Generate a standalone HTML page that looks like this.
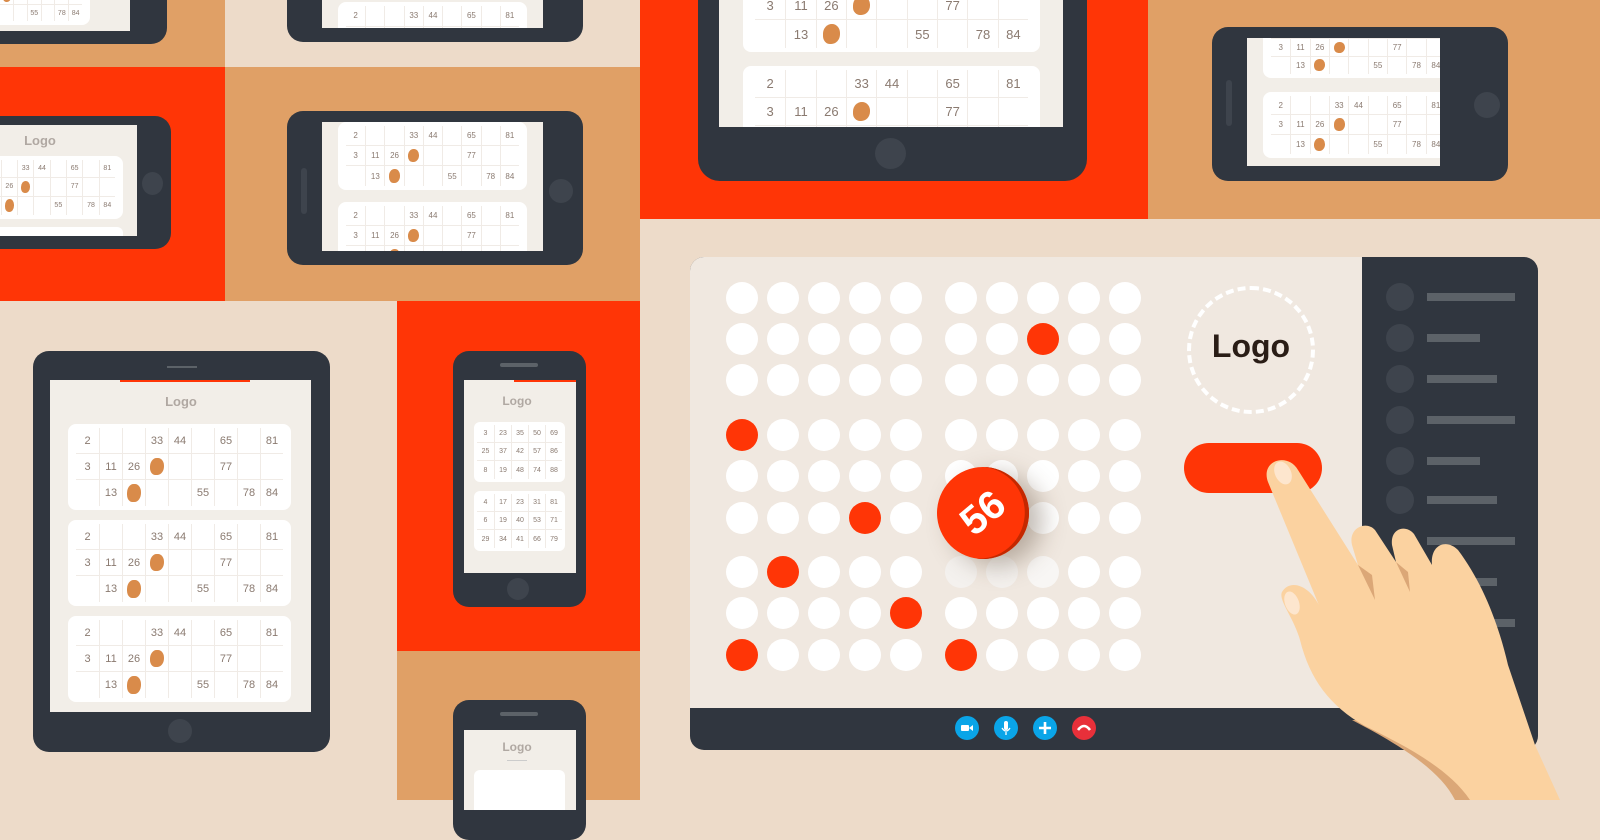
<!DOCTYPE html>
<html><head><meta charset="utf-8"><style>
*{margin:0;padding:0;box-sizing:border-box}
body{width:1600px;height:800px;overflow:hidden;position:relative;background:#EDDBC9;font-family:"Liberation Sans",sans-serif}
.a{position:absolute}
.fr{position:absolute;background:#30363F;border-radius:16px}
.sc{position:absolute;background:#F2EEE8;overflow:hidden}
.card{position:absolute;background:#fff;border-radius:8px;display:grid;grid-template-columns:repeat(9,1fr);grid-template-rows:repeat(3,1fr);padding:4px 8px;color:#8a7a70}
.card i{font-style:normal;display:flex;align-items:center;justify-content:center;border-left:1px solid #f0ebe6;border-bottom:1px solid #f0ebe6;position:relative}
.card i:nth-child(9n+1){border-left:none}
.card i:nth-child(n+19){border-bottom:none}
.card b{display:block;width:60%;height:70%;background:#D98B4A;border-radius:50% 45% 50% 40%}
.btn{position:absolute;background:#3E444D;border-radius:50%}
.lg{position:absolute;color:#b0a8a2;font-weight:bold;text-align:center}
.pc{position:absolute;background:#fff;border-radius:6px;display:grid;grid-template-columns:repeat(5,1fr);grid-template-rows:repeat(3,1fr);font-size:7px;color:#8a7a70;padding:3px}
.pc i{font-style:normal;display:flex;align-items:center;justify-content:center;border-left:1px solid #f0ebe6;border-bottom:1px solid #f0ebe6}
.pc i:nth-child(5n+1){border-left:none}.pc i:nth-child(n+11){border-bottom:none}
.d{position:absolute;width:32px;height:32px;border-radius:50%;background:#fff;margin:-16px 0 0 -16px}
.r{background:#FF3506}
.sb{position:absolute;left:1386px;width:28px;height:28px;border-radius:50%;background:#3E444D}
.sl{position:absolute;left:1427px;height:8px;background:#5C6268}
.ic{position:absolute;top:716px}
</style></head><body>
<div class="a" style="left:0;top:0;width:225px;height:67px;background:#E0A066"></div>
<div class="a" style="left:0;top:67px;width:225px;height:234px;background:#FF3506"></div>
<div class="a" style="left:225px;top:67px;width:415px;height:234px;background:#E0A066"></div>
<div class="a" style="left:397px;top:301px;width:243px;height:350px;background:#FF3506"></div>
<div class="a" style="left:397px;top:651px;width:243px;height:149px;background:#E0A066"></div>
<div class="a" style="left:640px;top:0;width:508px;height:219px;background:#FF3506"></div>
<div class="a" style="left:1148px;top:0;width:452px;height:219px;background:#E0A066"></div>

<div class="fr" style="left:-40px;top:-80px;width:207px;height:124px"></div>
<div class="sc" style="left:-10px;top:-10px;width:140px;height:41px">
<div class="card" style="left:-40px;top:-20px;width:140px;height:55px;font-size:7px"><i>2</i><i></i><i></i><i>33</i><i>44</i><i></i><i>65</i><i></i><i>81</i><i>3</i><i>11</i><i>26</i><i><b></b></i><i></i><i></i><i>77</i><i></i><i></i><i></i><i>13</i><i><b></b></i><i></i><i></i><i>55</i><i></i><i>78</i><i>84</i></div></div>

<div class="fr" style="left:287px;top:-100px;width:296px;height:142px"></div>
<div class="sc" style="left:322px;top:-10px;width:221px;height:38px">
<div class="card" style="left:16px;top:12px;width:189px;height:70px;font-size:8px"><i>2</i><i></i><i></i><i>33</i><i>44</i><i></i><i>65</i><i></i><i>81</i><i>3</i><i>11</i><i>26</i><i><b></b></i><i></i><i></i><i>77</i><i></i><i></i><i></i><i>13</i><i><b></b></i><i></i><i></i><i>55</i><i></i><i>78</i><i>84</i></div></div>

<div class="fr" style="left:-60px;top:116px;width:231px;height:133px"></div>
<div class="sc" style="left:-30px;top:125px;width:167px;height:111px">
<div class="lg" style="left:30px;top:8px;width:80px;font-size:13px">Logo</div>
<div class="card" style="left:-10px;top:31px;width:163px;height:63px;font-size:7px"><i>2</i><i></i><i></i><i>33</i><i>44</i><i></i><i>65</i><i></i><i>81</i><i>3</i><i>11</i><i>26</i><i><b></b></i><i></i><i></i><i>77</i><i></i><i></i><i></i><i>13</i><i><b></b></i><i></i><i></i><i>55</i><i></i><i>78</i><i>84</i></div>
<div class="a" style="left:-10px;top:102px;width:163px;height:20px;background:#fff;border-radius:6px"></div></div>
<div class="btn" style="left:142px;top:172px;width:21px;height:23px"></div>

<div class="fr" style="left:287px;top:111px;width:296px;height:154px"></div>
<div class="a" style="left:301px;top:168px;width:6px;height:46px;border-radius:3px;background:#3E444D"></div>
<div class="btn" style="left:549px;top:179px;width:24px;height:24px"></div>
<div class="sc" style="left:322px;top:122px;width:221px;height:129px">
<div class="card" style="left:16px;top:0;height:68px;font-size:8px;width:189px"><i>2</i><i></i><i></i><i>33</i><i>44</i><i></i><i>65</i><i></i><i>81</i><i>3</i><i>11</i><i>26</i><i><b></b></i><i></i><i></i><i>77</i><i></i><i></i><i></i><i>13</i><i><b></b></i><i></i><i></i><i>55</i><i></i><i>78</i><i>84</i></div>
<div class="card" style="left:16px;top:80px;width:189px;height:68px;font-size:8px"><i>2</i><i></i><i></i><i>33</i><i>44</i><i></i><i>65</i><i></i><i>81</i><i>3</i><i>11</i><i>26</i><i><b></b></i><i></i><i></i><i>77</i><i></i><i></i><i></i><i>13</i><i><b></b></i><i></i><i></i><i>55</i><i></i><i>78</i><i>84</i></div></div>

<div class="fr" style="left:33px;top:351px;width:297px;height:401px"></div>
<div class="a" style="left:167px;top:366px;width:30px;height:2px;background:#5C6268"></div>
<div class="btn" style="left:168px;top:719px;width:24px;height:24px"></div>
<div class="sc" style="left:50px;top:380px;width:261px;height:332px">
<div class="a" style="left:70px;top:0;width:130px;height:2px;background:#FF3506"></div>
<div class="lg" style="left:90px;top:14px;width:82px;font-size:13px">Logo</div>
<div class="card" style="left:18px;top:44px;width:223px;height:86px;font-size:11px"><i>2</i><i></i><i></i><i>33</i><i>44</i><i></i><i>65</i><i></i><i>81</i><i>3</i><i>11</i><i>26</i><i><b></b></i><i></i><i></i><i>77</i><i></i><i></i><i></i><i>13</i><i><b></b></i><i></i><i></i><i>55</i><i></i><i>78</i><i>84</i></div>
<div class="card" style="left:18px;top:140px;width:223px;height:86px;font-size:11px"><i>2</i><i></i><i></i><i>33</i><i>44</i><i></i><i>65</i><i></i><i>81</i><i>3</i><i>11</i><i>26</i><i><b></b></i><i></i><i></i><i>77</i><i></i><i></i><i></i><i>13</i><i><b></b></i><i></i><i></i><i>55</i><i></i><i>78</i><i>84</i></div>
<div class="card" style="left:18px;top:236px;width:223px;height:86px;font-size:11px"><i>2</i><i></i><i></i><i>33</i><i>44</i><i></i><i>65</i><i></i><i>81</i><i>3</i><i>11</i><i>26</i><i><b></b></i><i></i><i></i><i>77</i><i></i><i></i><i></i><i>13</i><i><b></b></i><i></i><i></i><i>55</i><i></i><i>78</i><i>84</i></div></div>

<div class="fr" style="left:453px;top:351px;width:133px;height:256px"></div>
<div class="a" style="left:500px;top:363px;width:38px;height:4px;border-radius:2px;background:#5C6268"></div>
<div class="btn" style="left:507px;top:578px;width:22px;height:22px"></div>
<div class="sc" style="left:464px;top:380px;width:112px;height:193px">
<div class="a" style="left:50px;top:0;width:62px;height:2px;background:#FF3506"></div>
<div class="lg" style="left:0;top:14px;width:106px;font-size:12px">Logo</div>
<div class="pc" style="left:10px;top:42px;width:91px;height:60px"><i>3</i><i>23</i><i>35</i><i>50</i><i>69</i><i>25</i><i>37</i><i>42</i><i>57</i><i>86</i><i>8</i><i>19</i><i>48</i><i>74</i><i>88</i></div>
<div class="pc" style="left:10px;top:111px;width:91px;height:60px"><i>4</i><i>17</i><i>23</i><i>31</i><i>81</i><i>6</i><i>19</i><i>40</i><i>53</i><i>71</i><i>29</i><i>34</i><i>41</i><i>66</i><i>79</i></div></div>

<div class="fr" style="left:453px;top:700px;width:133px;height:140px"></div>
<div class="a" style="left:500px;top:712px;width:38px;height:4px;border-radius:2px;background:#5C6268"></div>
<div class="sc" style="left:464px;top:730px;width:112px;height:80px">
<div class="lg" style="left:0;top:10px;width:106px;font-size:12px">Logo</div>
<div class="a" style="left:43px;top:30px;width:20px;height:1px;background:#ccc"></div>
<div class="pc" style="left:10px;top:40px;width:91px;height:60px"></div></div>

<div class="fr" style="left:698px;top:-100px;width:389px;height:281px;border-radius:22px"></div>
<div class="btn" style="left:875px;top:138px;width:31px;height:31px"></div>
<div class="sc" style="left:719px;top:-10px;width:344px;height:137px">
<div class="card" style="left:24px;top:-30px;width:297px;height:92px;font-size:13px;padding:4px 12px"><i>2</i><i></i><i></i><i>33</i><i>44</i><i></i><i>65</i><i></i><i>81</i><i>3</i><i>11</i><i>26</i><i><b></b></i><i></i><i></i><i>77</i><i></i><i></i><i></i><i>13</i><i><b></b></i><i></i><i></i><i>55</i><i></i><i>78</i><i>84</i></div>
<div class="card" style="left:24px;top:76px;width:297px;height:92px;font-size:13px;padding:4px 12px"><i>2</i><i></i><i></i><i>33</i><i>44</i><i></i><i>65</i><i></i><i>81</i><i>3</i><i>11</i><i>26</i><i><b></b></i><i></i><i></i><i>77</i><i></i><i></i><i></i><i>13</i><i><b></b></i><i></i><i></i><i>55</i><i></i><i>78</i><i>84</i></div></div>

<div class="fr" style="left:1212px;top:27px;width:296px;height:154px"></div>
<div class="a" style="left:1226px;top:80px;width:6px;height:46px;border-radius:3px;background:#3E444D"></div>
<div class="btn" style="left:1474px;top:92px;width:26px;height:26px"></div>
<div class="sc" style="left:1247px;top:38px;width:193px;height:128px">
<div class="card" style="left:16px;top:-20px;width:190px;height:60px;font-size:8px"><i>2</i><i></i><i></i><i>33</i><i>44</i><i></i><i>65</i><i></i><i>81</i><i>3</i><i>11</i><i>26</i><i><b></b></i><i></i><i></i><i>77</i><i></i><i></i><i></i><i>13</i><i><b></b></i><i></i><i></i><i>55</i><i></i><i>78</i><i>84</i></div>
<div class="card" style="left:16px;top:54px;width:190px;height:66px;font-size:8px"><i>2</i><i></i><i></i><i>33</i><i>44</i><i></i><i>65</i><i></i><i>81</i><i>3</i><i>11</i><i>26</i><i><b></b></i><i></i><i></i><i>77</i><i></i><i></i><i></i><i>13</i><i><b></b></i><i></i><i></i><i>55</i><i></i><i>78</i><i>84</i></div></div>

<div class="a" style="left:690px;top:257px;width:848px;height:493px;background:#30363F;border-radius:14px"></div>
<div class="a" style="left:690px;top:257px;width:672px;height:451px;background:#F0E8E0;border-radius:14px 0 0 0"></div>
<div class="sb" style="top:283px"></div><div class="sl" style="top:293px;width:88px"></div>
<div class="sb" style="top:324px"></div><div class="sl" style="top:334px;width:53px"></div>
<div class="sb" style="top:365px"></div><div class="sl" style="top:375px;width:70px"></div>
<div class="sb" style="top:406px"></div><div class="sl" style="top:416px;width:88px"></div>
<div class="sb" style="top:447px"></div><div class="sl" style="top:457px;width:53px"></div>
<div class="sb" style="top:486px"></div><div class="sl" style="top:496px;width:70px"></div>
<div class="sl" style="top:537px;width:88px"></div>
<div class="sl" style="top:578px;width:70px"></div>
<div class="sl" style="top:619px;width:88px"></div>

<div>
<div class="d" style="left:742px;top:298px"></div><div class="d" style="left:783px;top:298px"></div><div class="d" style="left:824px;top:298px"></div><div class="d" style="left:865px;top:298px"></div><div class="d" style="left:906px;top:298px"></div><div class="d" style="left:961px;top:298px"></div><div class="d" style="left:1002px;top:298px"></div><div class="d" style="left:1043px;top:298px"></div><div class="d" style="left:1084px;top:298px"></div><div class="d" style="left:1125px;top:298px"></div>
<div class="d" style="left:742px;top:339px"></div><div class="d" style="left:783px;top:339px"></div><div class="d" style="left:824px;top:339px"></div><div class="d" style="left:865px;top:339px"></div><div class="d" style="left:906px;top:339px"></div><div class="d" style="left:961px;top:339px"></div><div class="d" style="left:1002px;top:339px"></div><div class="d r" style="left:1043px;top:339px"></div><div class="d" style="left:1084px;top:339px"></div><div class="d" style="left:1125px;top:339px"></div>
<div class="d" style="left:742px;top:380px"></div><div class="d" style="left:783px;top:380px"></div><div class="d" style="left:824px;top:380px"></div><div class="d" style="left:865px;top:380px"></div><div class="d" style="left:906px;top:380px"></div><div class="d" style="left:961px;top:380px"></div><div class="d" style="left:1002px;top:380px"></div><div class="d" style="left:1043px;top:380px"></div><div class="d" style="left:1084px;top:380px"></div><div class="d" style="left:1125px;top:380px"></div>
<div class="d r" style="left:742px;top:435px"></div><div class="d" style="left:783px;top:435px"></div><div class="d" style="left:824px;top:435px"></div><div class="d" style="left:865px;top:435px"></div><div class="d" style="left:906px;top:435px"></div><div class="d" style="left:961px;top:435px"></div><div class="d" style="left:1002px;top:435px"></div><div class="d" style="left:1043px;top:435px"></div><div class="d" style="left:1084px;top:435px"></div><div class="d" style="left:1125px;top:435px"></div>
<div class="d" style="left:742px;top:476px"></div><div class="d" style="left:783px;top:476px"></div><div class="d" style="left:824px;top:476px"></div><div class="d" style="left:865px;top:476px"></div><div class="d" style="left:906px;top:476px"></div><div class="d" style="left:961px;top:476px"></div><div class="d" style="left:1002px;top:476px"></div><div class="d" style="left:1043px;top:476px"></div><div class="d" style="left:1084px;top:476px"></div><div class="d" style="left:1125px;top:476px"></div>
<div class="d" style="left:742px;top:518px"></div><div class="d" style="left:783px;top:518px"></div><div class="d" style="left:824px;top:518px"></div><div class="d r" style="left:865px;top:518px"></div><div class="d" style="left:906px;top:518px"></div><div class="d" style="left:961px;top:518px"></div><div class="d" style="left:1002px;top:518px"></div><div class="d" style="left:1043px;top:518px"></div><div class="d" style="left:1084px;top:518px"></div><div class="d" style="left:1125px;top:518px"></div>
<div class="d" style="left:742px;top:572px"></div><div class="d r" style="left:783px;top:572px"></div><div class="d" style="left:824px;top:572px"></div><div class="d" style="left:865px;top:572px"></div><div class="d" style="left:906px;top:572px"></div><div class="d" style="left:961px;top:572px;background:#f4f1ee"></div><div class="d" style="left:1002px;top:572px;background:#f4f1ee"></div><div class="d" style="left:1043px;top:572px;background:#f8f6f4"></div><div class="d" style="left:1084px;top:572px"></div><div class="d" style="left:1125px;top:572px"></div>
<div class="d" style="left:742px;top:613px"></div><div class="d" style="left:783px;top:613px"></div><div class="d" style="left:824px;top:613px"></div><div class="d" style="left:865px;top:613px"></div><div class="d r" style="left:906px;top:613px"></div><div class="d" style="left:961px;top:613px"></div><div class="d" style="left:1002px;top:613px"></div><div class="d" style="left:1043px;top:613px"></div><div class="d" style="left:1084px;top:613px"></div><div class="d" style="left:1125px;top:613px"></div>
<div class="d r" style="left:742px;top:655px"></div><div class="d" style="left:783px;top:655px"></div><div class="d" style="left:824px;top:655px"></div><div class="d" style="left:865px;top:655px"></div><div class="d" style="left:906px;top:655px"></div><div class="d r" style="left:961px;top:655px"></div><div class="d" style="left:1002px;top:655px"></div><div class="d" style="left:1043px;top:655px"></div><div class="d" style="left:1084px;top:655px"></div><div class="d" style="left:1125px;top:655px"></div>
</div>
<div class="a" style="left:937px;top:467px;width:92px;height:92px;border-radius:50%;background:#FF3506;box-shadow:6px 14px 24px rgba(80,60,40,.35),inset -3px -3px 0 #c42800;color:#fff;font-size:40px;font-weight:bold;text-align:center;line-height:92px;transform:rotate(-40deg)">56</div>

<div class="a" style="left:1187px;top:286px;width:128px;height:128px;border-radius:50%;border:4px dashed #fff"></div>
<div class="a" style="left:1187px;top:328px;width:128px;text-align:center;font-size:32px;font-weight:bold;color:#2a1d16">Logo</div>
<div class="a" style="left:1184px;top:443px;width:138px;height:50px;border-radius:25px;background:#FF3506"></div>

<svg class="ic" style="left:955px" width="24" height="24"><circle cx="12" cy="12" r="12" fill="#0AA5E8"/><rect x="6" y="9" width="8" height="6" rx="1" fill="#fff"/><path d="M14 12 L18 9 V15 Z" fill="#fff"/></svg>
<svg class="ic" style="left:994px" width="24" height="24"><circle cx="12" cy="12" r="12" fill="#0AA5E8"/><rect x="10" y="5" width="4" height="9" rx="2" fill="#fff"/><path d="M8 12 Q12 18 16 12 M12 16 V19" stroke="#fff" stroke-width="1.3" fill="none"/></svg>
<svg class="ic" style="left:1033px" width="24" height="24"><circle cx="12" cy="12" r="12" fill="#0AA5E8"/><path d="M12 6 V18 M6 12 H18" stroke="#fff" stroke-width="2.6"/></svg>
<svg class="ic" style="left:1072px" width="24" height="24"><circle cx="12" cy="12" r="12" fill="#E8303A"/><path d="M6 14 Q12 6 18 14" stroke="#fff" stroke-width="2.6" fill="none"/></svg>

<svg class="a" style="left:0;top:0" width="1600" height="800">
<path d="M1352,720 C1400,745 1440,770 1455,800 L1480,800 C1460,760 1420,740 1380,720 Z" fill="#DBA777"/>
<path d="M1268,482 C1260,460 1288,452 1298,470 L1358,565 L1352,545 C1348,528 1366,520 1375,530 L1396,562 L1392,545 C1390,528 1406,524 1414,534 L1432,565 C1430,545 1446,538 1458,550 C1482,582 1498,622 1508,665 L1535,745 L1560,800 L1470,800 C1450,770 1410,748 1365,726 C1330,706 1310,680 1300,640 C1294,618 1278,600 1282,592 C1290,578 1312,585 1322,612 L1330,632 Z" fill="#FBD2A0"/>
<path d="M1358,565 L1375,600 L1372,575 Z M1396,562 L1410,592 L1408,572 Z" fill="#DBA777"/>
<ellipse cx="1283" cy="473" rx="8" ry="12" transform="rotate(-25 1283 473)" fill="#FDE6CE"/>
<ellipse cx="1292" cy="603" rx="7" ry="12" transform="rotate(-20 1292 603)" fill="#FDE6CE"/>
</svg>
</body></html>
